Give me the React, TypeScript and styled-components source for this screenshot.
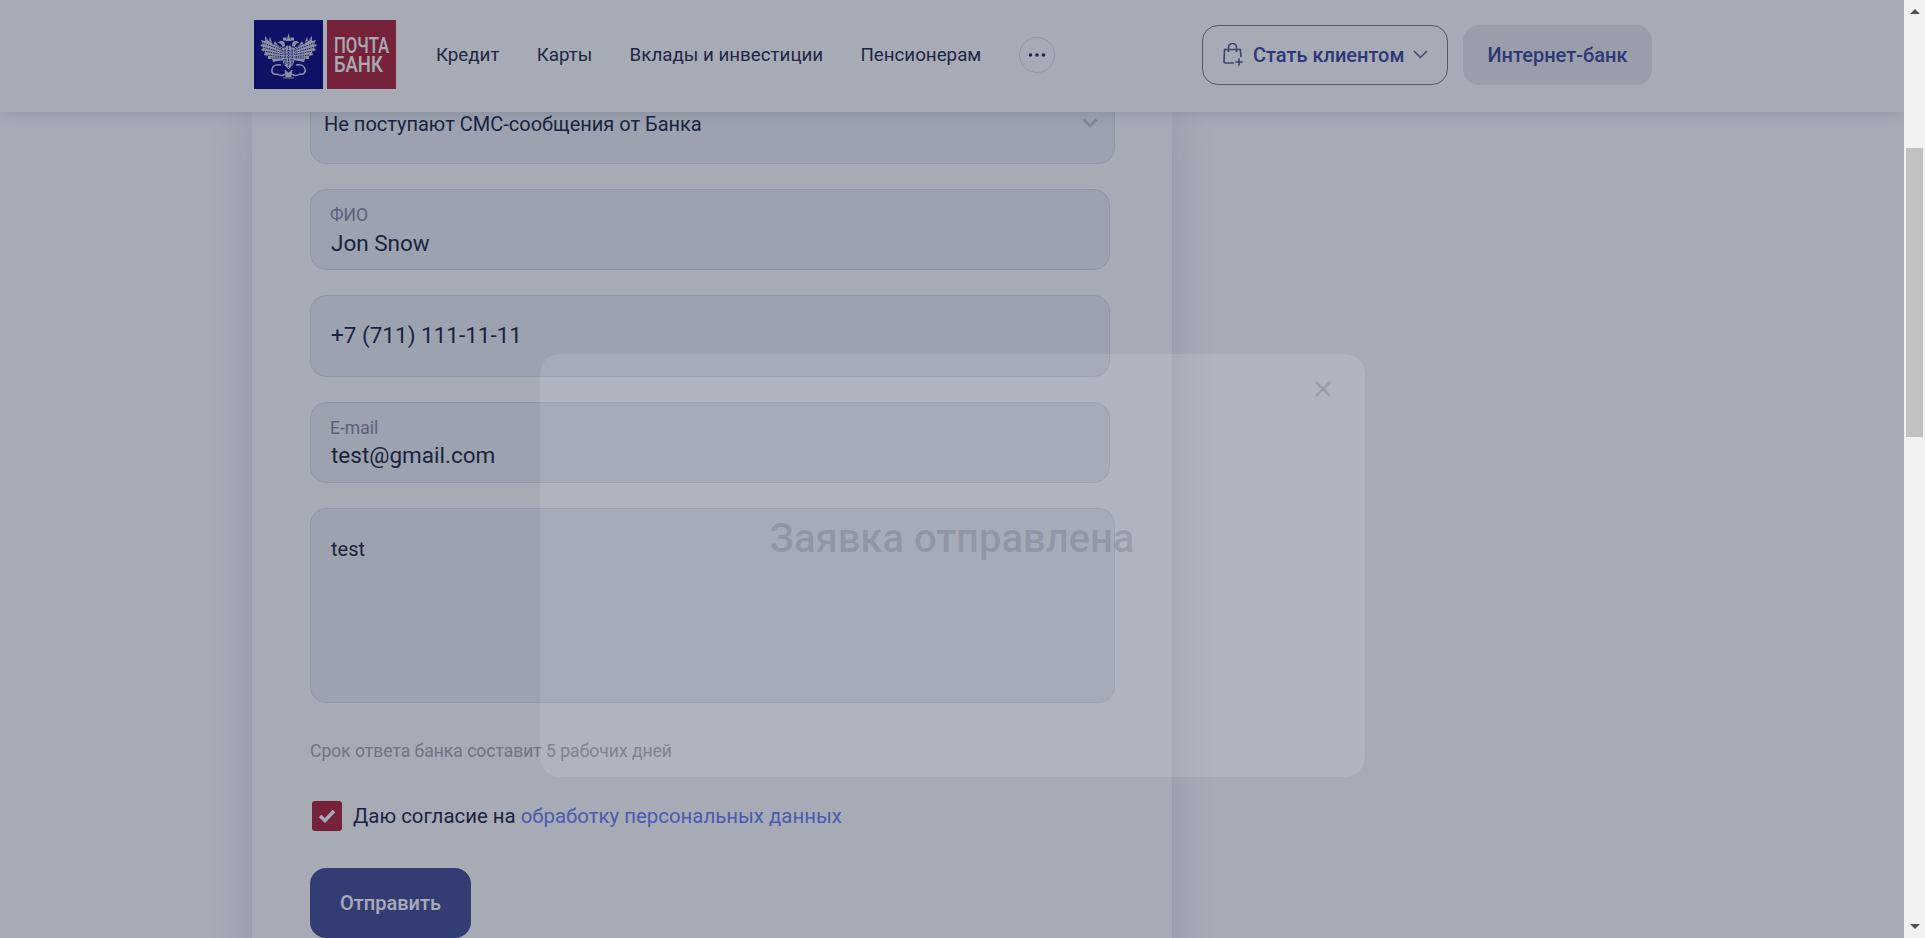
import React from 'react';
import styled, { createGlobalStyle } from 'styled-components';

const GlobalStyle = createGlobalStyle`
  html, body {
    margin: 0;
    padding: 0;
    height: 100%;
    overflow: hidden;
    background: #fff;
    font-family: Roboto, "Liberation Sans", sans-serif;
  }
  * {
    box-sizing: border-box;
  }
`;

const Window = styled.div`
  display: flex;
  width: 100vw;
  height: 100vh;
  overflow: hidden;
`;

const Viewport = styled.div`
  position: relative;
  flex: 1;
  min-width: 0;
  overflow: hidden;
  background: #fff;
`;

const Header = styled.header`
  position: relative;
  z-index: 2;
  display: flex;
  align-items: center;
  height: 112px;
  padding: 0 252px 3px 254px;
  background: #fff;
  box-shadow: 0 2px 14px rgba(27, 35, 65, 0.16);
`;

const LogoWrap = styled.a`
  display: flex;
  flex-shrink: 0;
  gap: 4px;
`;

const Nav = styled.nav`
  display: flex;
  align-items: center;
  gap: 37.25px;
  margin-left: 40px;
`;

const NavLink = styled.a`
  color: #1b2341;
  font-size: 18.75px;
  line-height: 24px;
  white-space: nowrap;
`;

const MoreButton = styled.button`
  display: flex;
  align-items: center;
  justify-content: center;
  width: 36px;
  height: 36px;
  padding: 0;
  border: 1px solid #dcdee4;
  border-radius: 50%;
  background: transparent;
`;

const HeaderActions = styled.div`
  display: flex;
  gap: 15px;
  margin-left: auto;
`;

const ClientButton = styled.button`
  display: flex;
  align-items: center;
  width: 246px;
  height: 60px;
  padding: 0 0 0 19px;
  border: 1px solid #737685;
  border-radius: 16px;
  background: transparent;
  color: #373f98;
  font: 500 20px Roboto, sans-serif;
  white-space: nowrap;
`;

const ClientLabel = styled.span`
  margin: 0 9px 0 9px;
`;

const BankButton = styled.button`
  width: 189px;
  height: 60px;
  padding: 0;
  border: 0;
  border-radius: 16px;
  background: #e9e9eb;
  color: #373f98;
  font: 500 20px Roboto, sans-serif;
  white-space: nowrap;
`;

const Card = styled.main`
  width: 920px;
  height: 1000px;
  margin-left: 252px;
  padding: 0 0 0 58px;
  background: #fff;
  box-shadow: 0 0 40px rgba(27, 35, 65, 0.16);
`;

const Form = styled.form`
  display: flex;
  flex-direction: column;
  align-items: flex-start;
`;

const Field = styled.div<{ $width: number; $height: number; $gap: number; $top?: number }>`
  display: flex;
  flex-direction: column;
  flex-shrink: 0;
  width: ${p => p.$width}px;
  height: ${p => p.$height}px;
  margin-top: ${p => p.$top ?? 0}px;
  margin-bottom: ${p => p.$gap}px;
  padding: 15px 20px 0 20px;
  border: 1px solid #dcdee4;
  border-radius: 16px;
  background: #edf0f3;
`;

const SelectField = styled(Field)`
  position: relative;
  padding: 42px 20px 0 13px;
`;

const SelectValue = styled.div`
  color: #141c3a;
  font-size: 20px;
  line-height: 24px;
`;

const SelectArrow = styled.svg`
  position: absolute;
  top: 48px;
  right: 16px;
`;

const FieldLabel = styled.div`
  margin-left: -1px;
  color: #7f859c;
  font-size: 17.5px;
  line-height: 20px;
`;

const FieldValue = styled.div<{ $pad?: number }>`
  margin-top: ${p => p.$pad ?? 4}px;
  color: #141c3a;
  font-size: 22.5px;
  line-height: 28px;
`;

const AreaValue = styled.div`
  margin-top: 13px;
  color: #141c3a;
  font-size: 20px;
  line-height: 24px;
`;

const Hint = styled.div`
  margin-top: 38px;
  color: #a3a3a8;
  font-size: 17.5px;
  line-height: 20px;
`;

const ConsentRow = styled.label`
  display: flex;
  align-items: center;
  gap: 11px;
  margin: 40px 0 0 2px;
  color: #141c3a;
  font-size: 20.4px;
  line-height: 30px;
`;

const Checkbox = styled.span`
  display: flex;
  align-items: center;
  justify-content: center;
  width: 30px;
  height: 30px;
  border-radius: 3px;
  background: #ae1c33;
`;

const ConsentLink = styled.a`
  color: #647bf5;
`;

const SubmitButton = styled.button`
  width: 161px;
  height: 70px;
  margin-top: 37px;
  padding: 0;
  border: 0;
  border-radius: 16px;
  background: #3e468f;
  color: #fff;
  font: 500 20px Roboto, sans-serif;
`;

const Overlay = styled.div`
  position: absolute;
  inset: 0;
  z-index: 3;
  display: flex;
  justify-content: center;
  padding-top: 354px;
  background: rgba(35, 45, 72, 0.4);
`;

const Modal = styled.div`
  position: relative;
  display: flex;
  justify-content: center;
  width: 825px;
  height: 423px;
  padding-top: 161px;
  border-radius: 20px;
  background: rgba(255, 255, 255, 0.11);
`;

const ModalTitle = styled.h2`
  margin: 0;
  color: rgba(29, 37, 64, 0.16);
  font-size: 40px;
  font-weight: 500;
  line-height: 48px;
`;

const CloseIcon = styled.svg`
  position: absolute;
  top: 27px;
  right: 34px;
`;

const ScrollRail = styled.div`
  display: flex;
  flex-direction: column;
  flex-shrink: 0;
  align-items: center;
  width: 21px;
  background: #f1f1f1;
`;

const ScrollArrow = styled.div<{ $down?: boolean }>`
  flex-shrink: 0;
  width: 0;
  height: 0;
  margin: 9px 0 0;
  border-right: 5px solid transparent;
  border-left: 5px solid transparent;
  ${p =>
    p.$down
      ? 'margin: auto 0 9px; border-top: 5px solid #505050;'
      : 'border-bottom: 5px solid #505050;'}
`;

const ScrollThumb = styled.div`
  flex-shrink: 0;
  width: 17px;
  height: 289px;
  margin-top: 134px;
  background: #c1c1c1;
`;

const eagleColor = '#cfd1df';

const feathers = [
  'M30 30L12 19',
  'M30 31L9 23',
  'M30 33L8 27',
  'M30 35L10 31',
  'M30 37L13 35',
  'M30 38L17 38',
];

const Wing = () => (
  <>
    <path
      d="M31 28C27 28 24 26 21 21L19 25 16 17 15 21 11 16 11 21 7 20 9 24 6 25 9 28 7 30 11 32 10 35 14 36 14 39 18 39 19 42 24 41 31 40Z"
      fill={eagleColor}
    />
    {feathers.map(d => (
      <path key={d} d={d} fill="none" stroke="#00007a" strokeWidth=".9" strokeDasharray="1.6 .8" />
    ))}
  </>
);

const Logo = () => (
  <LogoWrap>
    <svg width="69" height="69" viewBox="0 0 69 69">
      <rect width="69" height="69" fill="#00007a" />
      <Wing />
      <g transform="matrix(-1 0 0 1 69 0)">
        <Wing />
      </g>
      <path d="M29 28l5.500-3 5.500 3 1.500 9-2.500 8-4.500 4-4.500-4-2.500-8z" fill={eagleColor} />
      <path
        d="M28 31h13M28 34h13M28 37h13M29 40h11M30 43h9M31 27v20M34.500 25v24M38 27v20"
        stroke="#00007a"
        strokeWidth=".9"
        strokeDasharray="1.400 1"
      />
      <path d="M31 26c0-3-1-5-4-5-1 0-2 .5-3 2l2.500 .5c.5 1 1.500 2 2 3.500z" fill={eagleColor} />
      <path d="M38 26c0-3 1-5 4-5 1 0 2 .5 3 2l-2.500 .5c-.5 1-1.500 2-2 3.500z" fill={eagleColor} />
      <path d="M33 19l1.500-6 1.500 6 1 2h-5zM29 17.500h3.500v3H29zM36.500 17.500H40v3h-3.500z" fill={eagleColor} />
      <path
        d="M27 45c-4-1-8 0-9 4s2 6 5 5c3 2 6 2 8 0M42 45c4-1 8 0 9 4s-2 6-5 5c-3 2-6 2-8 0"
        fill="none"
        stroke={eagleColor}
        strokeWidth="1.500"
      />
      <path d="M31 50l3.500 3 3.500-3-1 7h-5zM29 58h11" fill={eagleColor} stroke={eagleColor} strokeWidth=".8" />
    </svg>
    <svg width="69" height="69" viewBox="0 0 69 69">
      <rect width="69" height="69" fill="#ae1c33" />
      <text
        transform="translate(7 33) scale(.76 1)"
        fill="#fff"
        fontFamily="Roboto, sans-serif"
        fontSize="22"
        fontWeight="500"
      >
        ПОЧТА
      </text>
      <text
        transform="translate(7 52) scale(.84 1)"
        fill="#fff"
        fontFamily="Roboto, sans-serif"
        fontSize="22"
        fontWeight="500"
      >
        БАНК
      </text>
    </svg>
  </LogoWrap>
);

const BagIcon = () => (
  <svg width="22" height="23" viewBox="0 0 22 23" fill="none" stroke="#4f5c80" strokeWidth="1.7">
    <path d="M12 20H3.500A1.500 1.500 0 0 1 2 18.500L2.600 6.500h15.800l.6 7.500" />
    <path d="M6.500 9V4.500a3.800 3.800 0 0 1 8 0V9" />
    <path d="M17 16v6M14 19h6" strokeLinecap="round" />
  </svg>
);

export default function App() {
  return (
    <>
      <GlobalStyle />
      <Window>
        <Viewport>
          <Header>
            <Logo />
            <Nav>
              <NavLink>Кредит</NavLink>
              <NavLink>Карты</NavLink>
              <NavLink>Вклады и инвестиции</NavLink>
              <NavLink>Пенсионерам</NavLink>
              <MoreButton>
                <svg width="18" height="4" viewBox="0 0 18 4" fill="#1b2341">
                  <circle cx="2.500" cy="2" r="1.800" />
                  <circle cx="9" cy="2" r="1.800" />
                  <circle cx="15.500" cy="2" r="1.800" />
                </svg>
              </MoreButton>
            </Nav>
            <HeaderActions>
              <ClientButton>
                <BagIcon />
                <ClientLabel>Стать клиентом</ClientLabel>
                <svg width="15" height="9" viewBox="0 0 15 9" fill="none" stroke="#4f5c80" strokeWidth="1.500">
                  <path d="M1 1l6.500 6.500L14 1" />
                </svg>
              </ClientButton>
              <BankButton>Интернет-банк</BankButton>
            </HeaderActions>
          </Header>
          <Card>
            <Form>
              <SelectField $width={805} $height={95} $gap={25} $top={-43}>
                <SelectValue>Не поступают СМС-сообщения от Банка</SelectValue>
                <SelectArrow width="16" height="10" viewBox="0 0 16 10" fill="none" stroke="#c0c3cd" strokeWidth="2.600">
                  <path d="M1.500 1.500L8 8l6.500-6.500" />
                </SelectArrow>
              </SelectField>
              <Field $width={800} $height={81} $gap={25}>
                <FieldLabel>ФИО</FieldLabel>
                <FieldValue>Jon Snow</FieldValue>
              </Field>
              <Field $width={800} $height={82} $gap={25}>
                <FieldValue $pad={10}>+7 (711) 111-11-11</FieldValue>
              </Field>
              <Field $width={800} $height={81} $gap={25}>
                <FieldLabel>E-mail</FieldLabel>
                <FieldValue $pad={3}>test@gmail.com</FieldValue>
              </Field>
              <Field $width={805} $height={195} $gap={0}>
                <AreaValue>test</AreaValue>
              </Field>
              <Hint>Срок ответа банка составит 5 рабочих дней</Hint>
              <ConsentRow>
                <Checkbox>
                  <svg width="18" height="14" viewBox="0 0 18 14" fill="none" stroke="#fff" strokeWidth="3.600">
                    <path d="M2 7l5 4.500L16 2" />
                  </svg>
                </Checkbox>
                <span>
                  Даю согласие на <ConsentLink>обработку персональных данных</ConsentLink>
                </span>
              </ConsentRow>
              <SubmitButton type="button">Отправить</SubmitButton>
            </Form>
          </Card>
          <Overlay>
            <Modal>
              <CloseIcon width="16" height="16" viewBox="0 0 16 16" fill="none" stroke="rgba(29, 37, 64, 0.18)" strokeWidth="2">
                <path d="M1 1l14 14M15 1L1 15" />
              </CloseIcon>
              <ModalTitle>Заявка отправлена</ModalTitle>
            </Modal>
          </Overlay>
        </Viewport>
        <ScrollRail>
          <ScrollArrow />
          <ScrollThumb />
          <ScrollArrow $down />
        </ScrollRail>
      </Window>
    </>
  );
}
